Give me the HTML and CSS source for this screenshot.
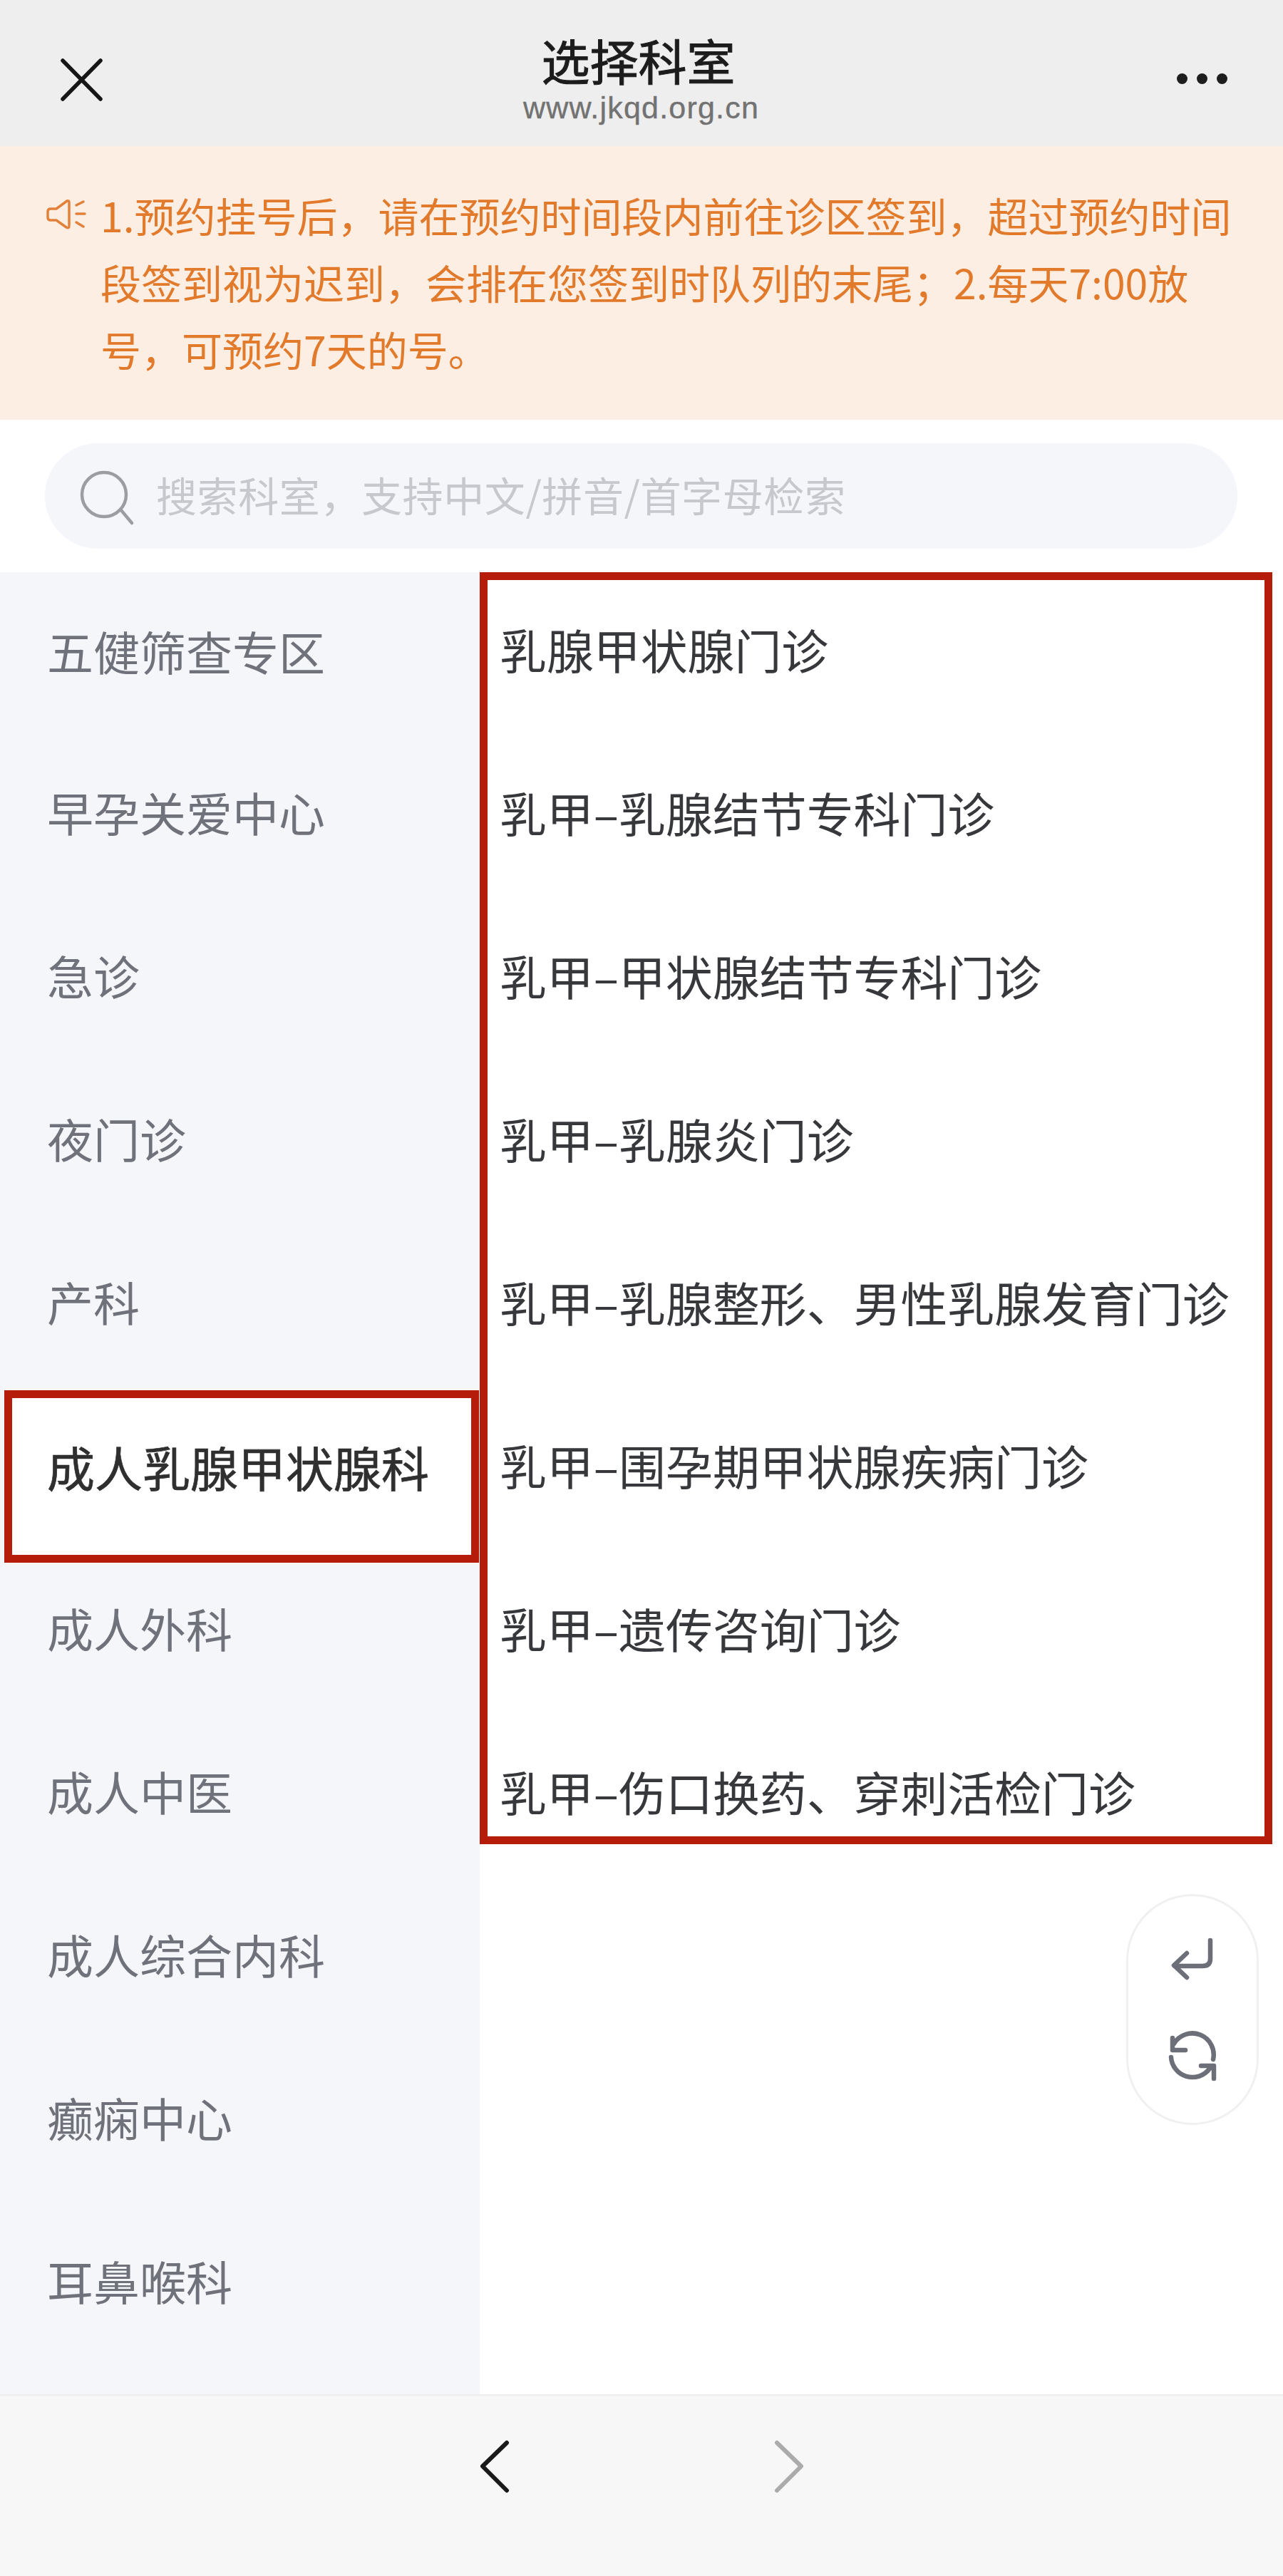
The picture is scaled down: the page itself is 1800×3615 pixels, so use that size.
FILE: index.html
```html
<!DOCTYPE html>
<html lang="zh-CN">
<head>
<meta charset="utf-8">
<title>选择科室</title>
<link rel="stylesheet" href="styles.css">
</head>
<body>
<div class="page">
  <header class="topbar">
    <svg class="close-icon" width="59" height="60" viewBox="0 0 59 60"><path d="M3 3 L56 57 M56 3 L3 57"/></svg>
    <div class="title-block">
      <div class="title">选择科室</div>
      <div class="url">www.jkqd.org.cn</div>
    </div>
    <div class="more"><span class="dot"></span><span class="dot"></span><span class="dot"></span></div>
  </header>

  <section class="notice">
    <svg class="speaker" width="56" height="46" viewBox="0 0 56 46"><path d="M6 15 H14 L29 4 Q32 3 32 6 V39 Q32 43 28 41 L14 31 H6 Q2 31 2 27 V19 Q2 15 6 15 Z"/><path d="M42 10 L52 5 M42 22 H54 M42 34 L52 40"/></svg>
    <p class="notice-text">1.预约挂号后，请在预约时间段内前往诊区签到，超过预约时间段签到视为迟到，会排在您签到时队列的末尾；2.每天7:00放<br>号，可预约7天的号。</p>
  </section>

  <div class="search-wrap">
    <div class="search">
      <svg class="search-icon" width="80" height="85" viewBox="0 0 80 85"><circle cx="36" cy="40" r="31"/><path d="M60 62 L75 80"/></svg>
      <span class="placeholder">搜索科室，支持中文/拼音/首字母检索</span>
    </div>
  </div>

  <main class="content">
    <nav class="sidebar">
      <div class="dept">五健筛查专区</div>
      <div class="dept">早孕关爱中心</div>
      <div class="dept">急诊</div>
      <div class="dept">夜门诊</div>
      <div class="dept">产科</div>
      <div class="dept dept-active">成人乳腺甲状腺科</div>
      <div class="dept">成人外科</div>
      <div class="dept">成人中医</div>
      <div class="dept">成人综合内科</div>
      <div class="dept">癫痫中心</div>
      <div class="dept">耳鼻喉科</div>
    </nav>
    <div class="panel">
      <div class="clinics">
        <div class="clinic">乳腺甲状腺门诊</div>
        <div class="clinic">乳甲–乳腺结节专科门诊</div>
        <div class="clinic">乳甲–甲状腺结节专科门诊</div>
        <div class="clinic">乳甲–乳腺炎门诊</div>
        <div class="clinic">乳甲–乳腺整形、男性乳腺发育门诊</div>
        <div class="clinic">乳甲–围孕期甲状腺疾病门诊</div>
        <div class="clinic">乳甲–遗传咨询门诊</div>
        <div class="clinic">乳甲–伤口换药、穿刺活检门诊</div>
      </div>
      <div class="float-pill">
        <svg class="pill-icon" width="66" height="68" viewBox="0 0 66 68"><path d="M58 8 V34 Q58 44 47 44 H8 M25 26 L7 43 L25 60"/></svg>
        <svg class="pill-icon" width="76" height="76" viewBox="0 0 76 76"><path d="M12 18 A30 30 0 0 1 67 40 M8 37 A30 30 0 0 0 62 53 M10 10 V27 H28 M68 67 V49 H50"/></svg>
      </div>
    </div>
  </main>

  <footer class="bottombar">
    <svg class="chev chev-on" width="42" height="75" viewBox="0 0 42 75"><path d="M38 4 L4 37 L38 71"/></svg>
    <svg class="chev chev-off" width="42" height="75" viewBox="0 0 42 75"><path d="M4 4 L38 37 L4 71"/></svg>
  </footer>
</div>
</body>
</html>
```
FILE: styles.css
```css
* { box-sizing: border-box; }
html, body { margin: 0; padding: 0; background: #fff; }
body { font-family: "Noto Sans CJK SC", "Liberation Sans", sans-serif; }
.page { width: 1800px; height: 3615px; display: flex; flex-direction: column; overflow: hidden; }

/* top bar */
.topbar { height: 205px; flex: none; background: #eeeeee; display: grid; grid-template-columns: 1fr auto 1fr; align-items: start; padding: 0 78px 0 85px; }
.close-icon { margin-top: 82px; }
.close-icon path { fill: none; stroke: #161616; stroke-width: 5.5; stroke-linecap: round; }
.title-block { display: flex; flex-direction: column; align-items: center; padding-top: 40px; margin-right: 8px; }
.title { font-size: 68px; line-height: 88px; margin-right: 8px; color: #1c1c1c; -webkit-text-stroke: 1px #1c1c1c; }
.url { font-family: "Liberation Sans", sans-serif; font-size: 43px; line-height: 46px; letter-spacing: 1.2px; color: #727272; -webkit-text-stroke: 0.4px #727272; }
.more { justify-self: end; display: flex; gap: 13px; margin-top: 103px; }
.dot { width: 15px; height: 15px; border-radius: 50%; background: #1e1e1e; }

/* notice */
.notice { height: 384px; flex: none; background: #fdeee4; display: flex; align-items: flex-start; gap: 20px; padding: 49px 60px 0 65px; }
.speaker { flex: none; margin-top: 24px; }
.speaker path { fill: none; stroke: #e2813a; stroke-width: 3.5; stroke-linecap: round; stroke-linejoin: round; }
.notice-text { margin: 0; font-size: 57px; line-height: 94px; color: #e27a2c; }

/* search */
.search-wrap { height: 214px; flex: none; padding: 33px 64px 33px 63px; background: #fff; }
.search { height: 148px; border-radius: 74px; background: #f5f6fa; display: flex; align-items: center; gap: 29px; padding-left: 47px; }
.search-icon { flex: none; }
.search-icon circle, .search-icon path { fill: none; stroke: #9b9da3; stroke-width: 4.5; stroke-linecap: round; }
.placeholder { font-size: 57px; letter-spacing: 0.6px; margin-bottom: 6px; color: #c6c8cd; }

/* main */
.content { flex: 1; min-height: 0; display: flex; }
.sidebar { width: 673px; flex: none; background: #f5f6fa; overflow: hidden; }
.dept { height: 229px; padding: 70px 0 0 66px; font-size: 65px; line-height: 80px; color: #6f727b; }
.dept:first-child { height: 226px; }
.dept-active { height: 242px; margin: 6px 1px -19px 6px; padding: 56px 0 0 49px; background: #fff; border: 11px solid #b51c0a; font-size: 67px; color: #2f2f2f; -webkit-text-stroke: 0.7px #2f2f2f; white-space: nowrap; }
.panel { flex: 1; min-width: 0; background: #fff; display: flex; flex-direction: column; }
.clinics { width: 1112px; display: flex; flex-direction: column; gap: 149px; padding: 57px 0 23px 17px; border: 11px solid #b51c0a; }
.clinic { font-size: 65.9px; line-height: 80px; color: #36383c; white-space: nowrap; }
.float-pill { width: 186px; height: 324px; margin: 70px 34px 0 auto; border: 3px solid #f0f0f0; border-radius: 93px; display: flex; flex-direction: column; align-items: center; gap: 67px; padding-top: 54px; }
.pill-icon { flex: none; }
.pill-icon path { fill: none; stroke: #6d6f78; stroke-width: 6.5; stroke-linecap: round; stroke-linejoin: round; }

/* bottom */
.bottombar { height: 255px; flex: none; background: #f7f7f7; border-top: 2px solid #eeeeee; display: flex; justify-content: center; align-items: flex-start; gap: 371px; padding-top: 62px; }
.chev path { fill: none; stroke-width: 6; stroke-linecap: round; stroke-linejoin: round; }
.chev-on path { stroke: #1a1a1a; }
.chev-off path { stroke: #ababab; }
```
